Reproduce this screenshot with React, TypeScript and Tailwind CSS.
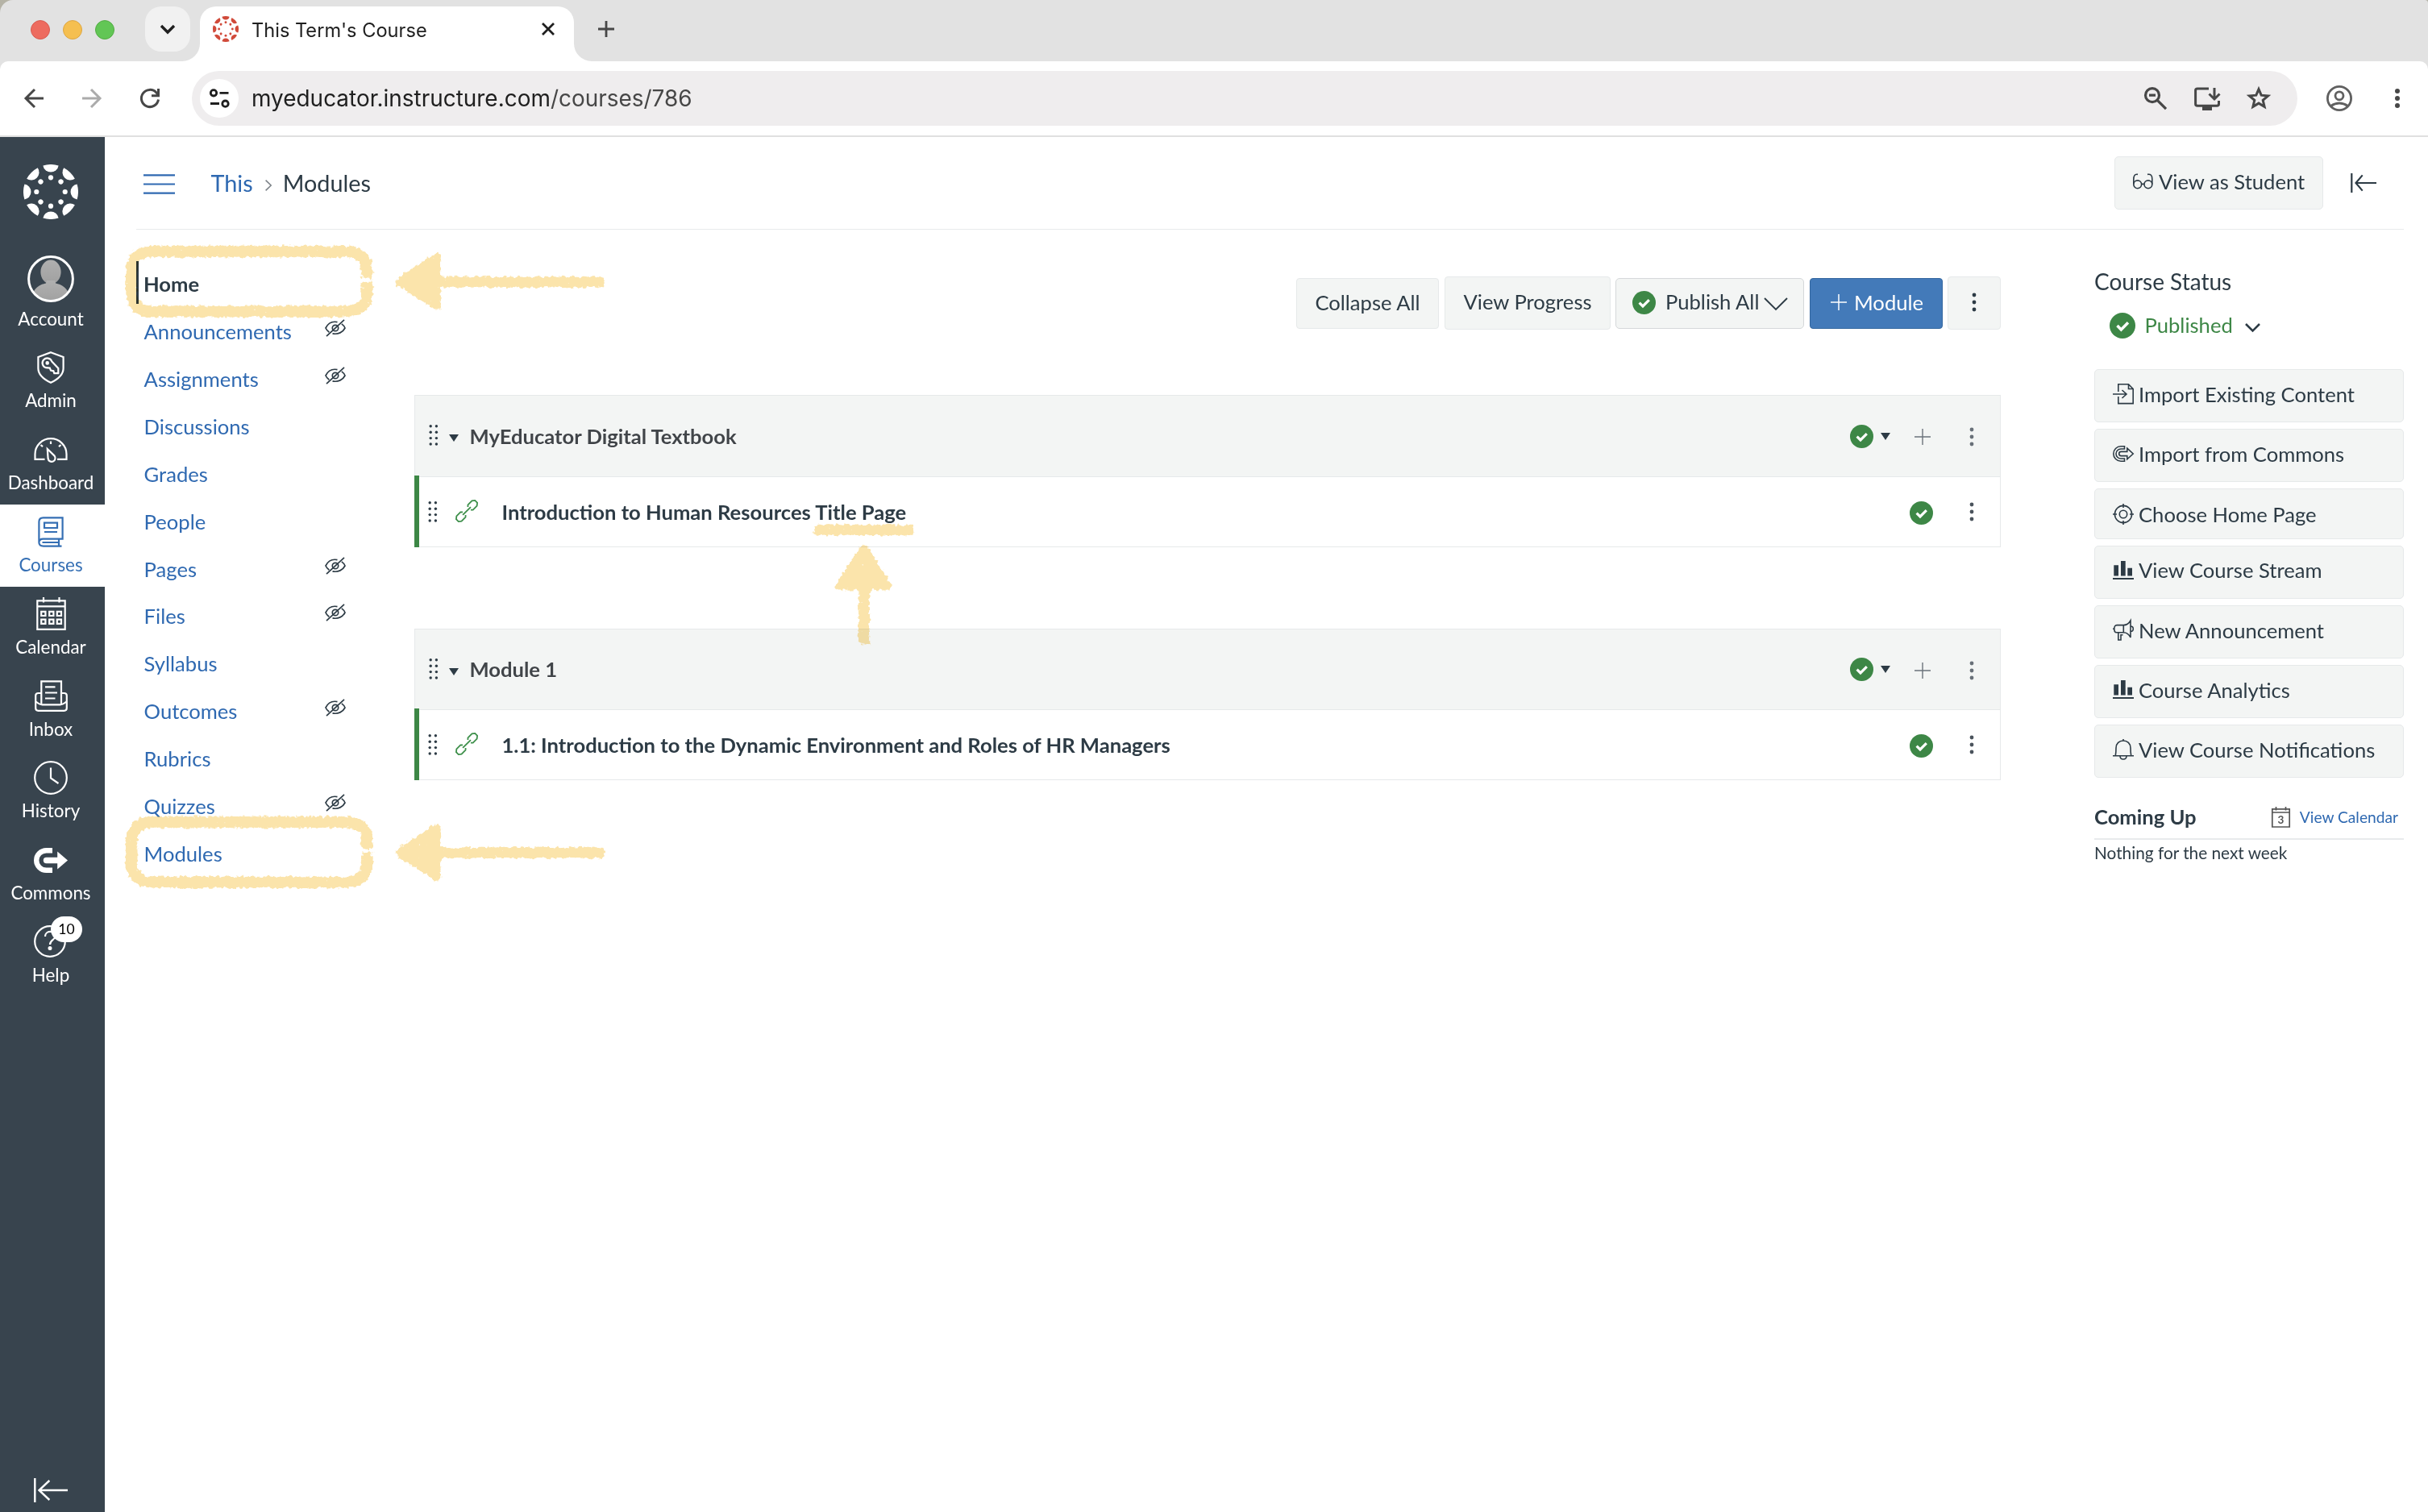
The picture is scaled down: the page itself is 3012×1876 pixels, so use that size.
import { type ReactNode } from "react";

interface IconProps {
  w: number;
  h: number;
  stroke?: number;
  className?: string;
  children: ReactNode;
}

function Icon({ w, h, stroke = 2, className = "", children }: IconProps) {
  return (
    <svg
      width={w}
      height={h}
      viewBox={`0 0 ${w} ${h}`}
      fill="none"
      stroke="currentColor"
      strokeWidth={stroke}
      className={`shrink-0 overflow-visible ${className}`}
    >
      {children}
    </svg>
  );
}

const ANGLES = [0, 45, 90, 135, 180, 225, 270, 315];

function CanvasLogo({ size, className = "" }: { size: number; className?: string }) {
  return (
    <svg width={size} height={size} viewBox="-34 -34 68 68" className={`shrink-0 ${className}`} fill="currentColor">
      {ANGLES.map((angle) => (
        <g key={angle} transform={`rotate(${angle})`}>
          <path d="M-9.6 -32.6A34 34 0 0 1 9.6 -32.6A9.7 9.4 0 0 1 -9.6 -32.6Z" />
          <circle cx="0" cy="-17.7" r="3.1" />
        </g>
      ))}
    </svg>
  );
}

function CheckCircle({ size = 29, className = "" }: { size?: number; className?: string }) {
  return (
    <svg width={size} height={size} viewBox="0 0 29 29" className={`shrink-0 ${className}`}>
      <circle cx="14.5" cy="14.5" r="14.5" fill="#3d8746" />
      <path d="M8.6 14.6L13 19L20.8 11.2" fill="none" stroke="#fff" strokeWidth="3.2" />
    </svg>
  );
}

function Kebab({ className = "" }: { className?: string }) {
  return (
    <svg width="20" height="24" viewBox="0 0 20 24" fill="currentColor" className={`shrink-0 ${className}`}>
      <circle cx="10" cy="3" r="2.4" />
      <circle cx="10" cy="12" r="2.4" />
      <circle cx="10" cy="21" r="2.4" />
    </svg>
  );
}

function Grip({ className = "" }: { className?: string }) {
  return (
    <svg width="12" height="26" viewBox="0 0 12 26" fill="currentColor" className={`shrink-0 ${className}`}>
      {[1.8, 9.2, 16.6, 24].map((y) => (
        <g key={y}>
          <circle cx="2.2" cy={y} r="1.7" />
          <circle cx="9.4" cy={y} r="1.7" />
        </g>
      ))}
    </svg>
  );
}

function Caret({ className = "" }: { className?: string }) {
  return (
    <svg width="12" height="9" viewBox="0 0 12 9" fill="currentColor" className={`shrink-0 ${className}`}>
      <path d="M0 0H12L6 9Z" />
    </svg>
  );
}

function EyeOff() {
  return (
    <Icon w={26} h={22} stroke={1.7} className="text-[#2d3b45]">
      <path d="M15.5 3.6C8.5 2.2 3.5 6 1 11C2 13.2 3.6 15 5.4 16.2M9.5 17.9C16.5 19.4 22.5 16 25 11C24 8.8 22.6 7.1 20.8 5.9" />
      <circle cx="13" cy="11" r="3.7" />
      <path d="M2 21.2L24 0.8" />
    </Icon>
  );
}

function CollapseIcon({ w, h, stroke }: { w: number; h: number; stroke: number }) {
  return (
    <Icon w={w} h={h} stroke={stroke}>
      <path d={`M1.3 0V${h}M6.5 ${h / 2}H${w}M${w * 0.46} ${h * 0.1}L6.5 ${h / 2}L${w * 0.46} ${h * 0.9}`} />
    </Icon>
  );
}

function TabStrip() {
  return (
    <div className="flex h-[76px] items-start rounded-tl-[16px] rounded-tr-[4px] bg-[#e2e2e2] pl-[38px]">
      <div className="mt-[25px] flex gap-4">
        <span className="size-6 rounded-full border border-[#d85a50] bg-[#ed6b5f]" />
        <span className="size-6 rounded-full border border-[#dda642] bg-[#f5bf50]" />
        <span className="size-6 rounded-full border border-[#52ac43] bg-[#62c655]" />
      </div>
      <button type="button" className="mt-2 ml-[38px] flex size-14 items-center justify-center rounded-[20px] bg-[#f1f1f1] text-[#1f1f1f]" aria-label="Search tabs">
        <Icon w={18} h={11} stroke={3.4}>
          <path d="M1 1L9 9L17 1" />
        </Icon>
      </button>
      <div className="relative mt-2 ml-3 flex h-[68px] w-[464px] items-center rounded-t-[20px] bg-white pb-3 pl-4">
        <svg width="22" height="22" className="absolute bottom-0 -left-[22px]" fill="#fff">
          <path d="M22 0V22H0A22 22 0 0 0 22 0Z" />
        </svg>
        <svg width="22" height="22" className="absolute -right-[22px] bottom-0" fill="#fff">
          <path d="M0 0V22H22A22 22 0 0 1 0 0Z" />
        </svg>
        <CanvasLogo size={32} className="text-[#d14a3a]" />
        <span className="mt-[4px] ml-4 flex-1 font-['Inter',sans-serif] text-[23.6px] leading-8 text-[#1f1f1f]">This Term's Course</span>
        <Icon w={16} h={16} stroke={2.8} className="mr-6 text-[#1f1f1f]">
          <path d="M1 1L15 15M15 1L1 15" />
        </Icon>
      </div>
      <Icon w={20} h={20} stroke={2.8} className="mt-[26px] ml-[30px] text-[#474747]">
        <path d="M10 0V20M0 10H20" />
      </Icon>
    </div>
  );
}

function AddressBar() {
  return (
    <div className="bg-[#e2e2e2]">
      <div className="flex h-[94px] items-center rounded-t-[10px] border-b-2 border-[#e0e0e0] bg-white text-[#474747]">
        <Icon w={24} h={24} stroke={3} className="ml-[30px]">
          <path d="M24 12H2.5M13 1L2 12L13 23" />
        </Icon>
        <Icon w={24} h={24} stroke={3} className="ml-12 text-[#ababab]">
          <path d="M0 12H21.5M11 1L22 12L11 23" />
        </Icon>
        <Icon w={24} h={24} stroke={3} className="ml-12">
          <path d="M22.5 13.5A10.6 10.6 0 1 1 20 5L23 8.5M22.5 0V8.8H14" />
        </Icon>
        <div className="ml-10 flex h-[68px] w-[2612px] items-center rounded-full bg-[#efedee] pl-[10px]">
          <span className="flex size-12 items-center justify-center rounded-full bg-white text-[#1f1f1f]">
            <Icon w={24} h={24} stroke={2.8}>
              <circle cx="5" cy="5.3" r="3.7" />
              <path d="M12.5 5.3H23.5M1 18.5H12" />
              <circle cx="19.5" cy="18.7" r="3.7" />
            </Icon>
          </span>
          <span className="ml-4 flex-1 font-['Inter',sans-serif] text-[27.95px] leading-10 text-[#1f1f1f]">
            myeducator.instructure.com<span className="text-[#474747]">/courses/786</span>
          </span>
          <Icon w={28} h={28} stroke={3.2}>
            <circle cx="10" cy="10.2" r="8.5" />
            <path d="M16.2 16.4L27 27.2M6 10.2H14" />
          </Icon>
          <Icon w={32} h={29} stroke={3} className="ml-[34px]">
            <path d="M18 2H4Q1.6 2 1.6 4V21Q1.6 23.3 4 23.3H28Q30.5 23.3 30.5 21V17" />
            <path d="M25 1V14.5M18.5 8.5L25 15L31.5 8.5" />
            <path d="M10 26.5H22" strokeWidth="5" />
          </Icon>
          <Icon w={32} h={32} stroke={3} className="mr-8 ml-8">
            <path d="M16 4.6L19.2 12.2L27.6 12.9L21.2 18.4L23.1 26.4L16 22.1L8.9 26.4L10.8 18.4L4.4 12.9L12.8 12.2Z" />
          </Icon>
        </div>
        <Icon w={32} h={32} stroke={2.8} className="ml-9 text-[#606060]">
          <circle cx="16" cy="16" r="14.6" />
          <circle cx="16" cy="12.8" r="5" />
          <path d="M5.5 25.5Q16 18.5 26.5 25.5" />
        </Icon>
        <svg width="8" height="24" viewBox="0 0 8 24" fill="currentColor" className="ml-[52px]">
          <circle cx="4" cy="3" r="3" />
          <circle cx="4" cy="12" r="3" />
          <circle cx="4" cy="21" r="3" />
        </svg>
      </div>
    </div>
  );
}

const globalNav: { label: string; active?: boolean; badge?: string; icon: ReactNode }[] = [
  {
    label: "Admin",
    icon: (
      <Icon w={34} h={40} stroke={2.2}>
        <path d="M17 1.2L32.6 7V21C32.6 30 25 35 17 38.8C9 35 1.4 30 1.4 21V7Z" />
        <path d="M18.3 12.5L26.3 21V27.2H21.3L20.3 24.3L17 23.6L15.8 20.6L11 20.2A6 6 0 1 1 18.3 12.5Z" />
        <circle cx="12.7" cy="14.4" r="1.2" />
      </Icon>
    ),
  },
  {
    label: "Dashboard",
    icon: (
      <Icon w={42} h={30} stroke={2.2}>
        <path d="M13.5 26.8H1.5V20.5A19.5 19.3 0 0 1 40.5 20.5V26.8H29" />
        <path d="M21 4.5V8M8.5 9L11 11.2M33.5 9L31 11.2" />
        <path d="M16.8 14L25.6 22.6A4.5 4.5 0 1 1 17.6 26Z" />
      </Icon>
    ),
  },
  {
    label: "Courses",
    active: true,
    icon: (
      <Icon w={32} h={38} stroke={2.2}>
        <path d="M29.5 36.6H7C3.6 36.6 1.4 34.8 1.4 32V6.5C1.4 3.3 3.4 1.3 6.6 1.3H30.6V27.6H6.5C3.4 27.6 1.4 29.4 1.4 32M26 28V36" />
        <path d="M5.5 32H25.5M8 19H24" />
        <path d="M8 7.6H24V14H8Z" />
      </Icon>
    ),
  },
  {
    label: "Calendar",
    icon: (
      <Icon w={37} h={41} stroke={2.2}>
        <path d="M1.3 4.3H35.7V39.8H1.3ZM1.3 11.3H35.7M9 0V6.5M28.5 0V6.5" />
        <path d="M6.2 17.8H11.4V23H6.2ZM16.2 17.8H21.4V23H16.2ZM25.8 17.8H31V23H25.8ZM6.2 27.6H11.4V32.8H6.2ZM16.2 27.6H21.4V32.8H16.2ZM25.8 27.6H31V32.8H25.8Z" />
      </Icon>
    ),
  },
  {
    label: "Inbox",
    icon: (
      <Icon w={41} h={39} stroke={2.2}>
        <path d="M8.3 29.5V1.3H33V29.5M13 8.3H25.5M13 15.5H28M13 22.5H25.5" />
        <path d="M8 16H4.5Q1.2 16 1.2 19V34.5Q1.2 37.8 4.5 37.8H36.5Q39.8 37.8 39.8 34.5V19Q39.8 16 36.5 16H33" />
        <path d="M1.5 26.5C4.5 29 6.5 30.3 9.5 30.3H31.5C34.5 30.3 36.5 29 39.5 26.5" />
      </Icon>
    ),
  },
  {
    label: "History",
    icon: (
      <Icon w={42} h={42} stroke={2.2}>
        <circle cx="21" cy="21" r="19.8" />
        <path d="M21 8.5V21.5L30.5 28" />
      </Icon>
    ),
  },
  {
    label: "Commons",
    icon: (
      <Icon w={42} h={31}>
        <path d="M23 3.2H15.5A12.3 12.3 0 0 0 15.5 27.8H23" strokeWidth="6.4" />
        <path d="M15.5 15.5H31" strokeWidth="7.4" strokeLinecap="round" />
        <path d="M29.2 4.5L42 15.5L29.2 26.5Z" fill="currentColor" stroke="none" />
      </Icon>
    ),
  },
  {
    label: "Help",
    badge: "10",
    icon: (
      <Icon w={42} h={40} stroke={2.2} className="mt-[-2px]">
        <circle cx="20" cy="20" r="18.8" />
        <path d="M14 14C14 6 26.5 6 26.5 13.5C26.5 18.5 20 18 20 24" />
        <circle cx="20" cy="28.5" r="1.4" fill="currentColor" />
      </Icon>
    ),
  },
];

function GlobalNav() {
  return (
    <aside className="flex w-[130px] shrink-0 flex-col bg-[#38444e] text-[22.4px] leading-7 text-white">
      <div className="flex h-[139px] items-center justify-center pr-1 pb-[3px]">
        <CanvasLogo size={68} />
      </div>
      <div className="flex h-[113.5px] flex-col items-center gap-[7px] pt-2 pr-1">
        <svg width="58" height="58" viewBox="0 0 58 58">
          <defs>
            <clipPath id="avatar">
              <circle cx="29" cy="29" r="26" />
            </clipPath>
            <linearGradient id="avatarFill" x1="0" y1="0" x2="0" y2="1">
              <stop offset="0" stopColor="#b0b0b0" />
              <stop offset="1" stopColor="#a0a0a0" />
            </linearGradient>
          </defs>
          <g clipPath="url(#avatar)" fill="url(#avatarFill)">
            <ellipse cx="29" cy="20.5" rx="12.6" ry="15" />
            <path d="M5 58C5 40 16 36 23 34.5L24 31H34L35 34.5C42 36 53 40 53 58Z" />
          </g>
          <circle cx="29" cy="29" r="27.4" fill="none" stroke="#fff" strokeWidth="3" />
        </svg>
        Account
      </div>
      {globalNav.map((item) => (
        <div
          key={item.label}
          className={`relative flex h-[101.8px] shrink-0 flex-col items-center gap-[1.2px] pt-[7.75px] pr-1 ${item.active ? "bg-white text-[#356fb4]" : ""}`}
        >
          <div className="flex h-[52px] items-center">{item.icon}</div>
          {item.label}
          {item.badge && (
            <span className="absolute top-[2px] left-[63px] flex h-8 w-[39px] items-center justify-center rounded-full bg-white text-[17.5px] text-black">
              {item.badge}
            </span>
          )}
        </div>
      ))}
      <div className="mt-auto mb-3 flex justify-center pr-1">
        <CollapseIcon w={42} h={30} stroke={2.4} />
      </div>
    </aside>
  );
}

const courseNav = [
  { label: "Home", current: true },
  { label: "Announcements", hidden: true },
  { label: "Assignments", hidden: true },
  { label: "Discussions" },
  { label: "Grades" },
  { label: "People" },
  { label: "Pages", hidden: true },
  { label: "Files", hidden: true },
  { label: "Syllabus" },
  { label: "Outcomes", hidden: true },
  { label: "Rubrics" },
  { label: "Quizzes", hidden: true },
  { label: "Modules" },
];

function CourseNav() {
  return (
    <nav className="w-[345px] shrink-0 pt-[37.8px] text-[25.6px] leading-8 text-[#2f69b1]">
      {courseNav.map((item) => (
        <div key={item.label} className="flex h-[58.9px] w-[260px] items-center justify-between">
          {item.current ? (
            <span className="mb-[3px] flex h-[53px] items-center border-l-[3px] border-[#2d3b45] pt-[3px] pl-[6px] font-bold text-[#2d3b45]">
              {item.label}
            </span>
          ) : (
            <span className="pl-[9.6px]">{item.label}</span>
          )}
          {item.hidden && (
            <span className="pb-[8px]">
              <EyeOff />
            </span>
          )}
        </div>
      ))}
    </nav>
  );
}

function Toolbar() {
  return (
    <div className="flex h-[66px] items-center justify-end text-[25.6px] leading-8">
      <button type="button" className="h-[63px] w-[177px] rounded-[4px] border border-[#e6e9ea] bg-[#f3f5f4] pb-[2px]">Collapse All</button>
      <button type="button" className="ml-[7px] h-[66px] w-[206px] rounded-[4px] border border-[#e6e9ea] bg-[#f3f5f4] pb-[4px]">View Progress</button>
      <button type="button" className="ml-[6px] flex h-[63px] w-[234px] items-center rounded-[5px] border border-[#d5d8da] bg-[#f3f5f4] pl-[20px]">
        <CheckCircle className="mb-px" />
        <span className="mb-[4px] ml-[12px]">Publish All</span>
        <Icon w={30} h={16} stroke={1.9} className="mt-[2px] ml-[6px]">
          <path d="M1 1L15 15L29 1" />
        </Icon>
      </button>
      <button type="button" className="ml-[7px] flex h-[63px] w-[165px] items-center rounded-[4px] border border-[#33679f] bg-[#437ab9] pb-[2px] pl-[25px] text-white">
        <Icon w={20} h={20} stroke={1.5}>
          <path d="M10 0V20M0 10H20" />
        </Icon>
        <span className="ml-[9px]">Module</span>
      </button>
      <button type="button" className="ml-[6px] flex h-[66px] w-[66px] items-center justify-center rounded-[4px] border border-[#e6e9ea] bg-[#f3f5f4] pb-[3px]" aria-label="More">
        <Kebab />
      </button>
    </div>
  );
}

interface ModuleProps {
  title: string;
  item: string;
  headerClass: string;
}

function ModuleCard({ title, item, headerClass }: ModuleProps) {
  return (
    <section className="border border-[#e6e9ea] text-[25.6px] leading-8 font-bold">
      <header className={`flex items-center bg-[#f3f5f4] pr-[25px] pl-[17px] ${headerClass}`}>
        <Grip className="mb-[2px]" />
        <Caret className="mt-[5px] ml-[13px]" />
        <h2 className="mb-px ml-[13.5px] flex-1 text-[#414549] [text-shadow:0_1px_1px_#fff]">{title}</h2>
        <CheckCircle />
        <Caret className="ml-[9px]" />
        <Icon w={20} h={20} stroke={1.4} className="mt-[2px] ml-[30px] text-[#6b737b]">
          <path d="M10 0V20M0 10H20" />
        </Icon>
        <Kebab className="mt-[2px] ml-[41px] text-[#687078]" />
      </header>
      <div className="relative flex h-[87px] items-center border-t border-[#e6e9ea] pr-[25px] pl-[16px]">
        <span className="absolute -top-[2px] -bottom-px -left-px w-[6px] bg-[#3d8746]" />
        <Grip />
        <Icon w={26} h={26} stroke={1.8} className="mb-[3px] ml-[23px] text-[#3d8f4a]">
          <g transform="rotate(-45 13 13)">
            <path d="M8.5 10.5L6.5 8.6H-0.5L-3.5 11V15L-0.5 17.4H6.5L8.5 15.5M17.5 15.5L19.5 17.4H26.5L29.5 15V11L26.5 8.6H19.5L17.5 10.5M6 13H20" />
          </g>
        </Icon>
        <a className="ml-[30.5px] flex-1">{item}</a>
        <CheckCircle className="mt-[3px]" />
        <Kebab className="ml-[38px] text-[#4a535c]" />
      </div>
    </section>
  );
}

const sideActions: { label: string; boxClass: string; icon: ReactNode }[] = [
  {
    label: "Import Existing Content",
    boxClass: "h-[66px] pb-[4px]",
    icon: (
      <Icon w={26} h={26} stroke={1.6}>
        <path d="M6.8 10V0.8H19.5L25.2 6.5V24.6H6.8V16M19.5 0.8V6.5H25.2M0 13H17M11.5 8L17 13L11.5 18" />
      </Icon>
    ),
  },
  {
    label: "Import from Commons",
    boxClass: "h-[66px] pb-[4px]",
    icon: (
      <Icon w={26} h={20} stroke={1.6}>
        <path d="M14.5 0.8H10A9.2 9.2 0 0 0 10 19.2H14.5V16H10A6 6 0 0 1 10 4H14.5ZM17.8 3.2L25.2 10L17.8 16.8V12.6H10.3A2.6 2.6 0 0 1 10.3 7.4H17.8Z" />
      </Icon>
    ),
  },
  {
    label: "Choose Home Page",
    boxClass: "h-[63px]",
    icon: (
      <Icon w={26} h={26} stroke={1.6}>
        <circle cx="13" cy="13" r="10.6" />
        <circle cx="13" cy="13" r="4.7" />
        <path d="M13 0V5M13 21V26M0 13H5M21 13H26" />
      </Icon>
    ),
  },
  {
    label: "View Course Stream",
    boxClass: "h-[66px] pb-[6px]",
    icon: (
      <Icon w={26} h={23}>
        <path d="M1.3 5.3H7V18.4H1.3ZM10 0H15.7V18.4H10ZM18.3 8.7H24V18.4H18.3Z" fill="currentColor" stroke="none" />
        <path d="M0 22H26" />
      </Icon>
    ),
  },
  {
    label: "New Announcement",
    boxClass: "h-[66px] pb-[5px]",
    icon: (
      <Icon w={26} h={26} stroke={1.6}>
        <path d="M22 1V22C20 18 17 15.8 13.3 15.8H4.5C2.5 15.8 1.8 14 1.8 11.3S2.8 6.6 5 6.6H13.3C17 6.6 20 4.5 22 1ZM13.3 6.6V15.8M6.8 15.8V25H10V18.8H12.5M22 8C26.4 8 26.4 14.6 22 14.6M0 11.2H1.8" />
      </Icon>
    ),
  },
  {
    label: "Course Analytics",
    boxClass: "h-[66px] pb-[5px]",
    icon: (
      <Icon w={26} h={23}>
        <path d="M1.3 5.3H7V18.4H1.3ZM10 0H15.7V18.4H10ZM18.3 8.7H24V18.4H18.3Z" fill="currentColor" stroke="none" />
        <path d="M0 22H26" />
      </Icon>
    ),
  },
  {
    label: "View Course Notifications",
    boxClass: "h-[66px] pb-[5px]",
    icon: (
      <Icon w={26} h={26} stroke={1.6}>
        <path d="M13 0V2M0 20.8H26M3.3 20.5C4 17 4 15 4 11C4 5.5 8 2 13 2S22 5.5 22 11C22 15 22 17 22.7 20.5M9 21C9 26.3 17 26.3 17 21" />
      </Icon>
    ),
  },
];

function RightSidebar() {
  return (
    <aside className="ml-[116px] w-[384px] shrink-0 pt-[46px]">
      <h2 className="text-[28px] leading-9">Course Status</h2>
      <div className="mt-[20px] flex h-[34px] items-center pl-[19px] text-[25.6px] leading-8 text-[#3d8746]">
        <CheckCircle size={32} />
        <span className="mb-[2px] ml-[11.5px]">Published</span>
        <Icon w={19} h={11} stroke={2.6} className="mt-1 ml-[15px] text-[#2d3b45]">
          <path d="M1 1L9.5 9.5L18 1" />
        </Icon>
      </div>
      <div className="mt-[37px] flex flex-col gap-2">
        {sideActions.map((action) => (
          <button
            type="button"
            key={action.label}
            className={`flex items-center gap-[6px] rounded-[5px] border border-[#e6e9ea] bg-[#f3f5f4] pl-[22px] text-[25.6px] leading-8 ${action.boxClass}`}
          >
            {action.icon}
            {action.label}
          </button>
        ))}
      </div>
      <div className="mt-[26px] flex h-[51px] items-center border-b-2 border-[#e8eaec] pr-[7px] pb-[4px]">
        <h2 className="flex-1 pb-[2px] text-[25.6px] leading-8 font-bold">Coming Up</h2>
        <Icon w={23} h={26} stroke={1.7} className="text-[#555]">
          <path d="M0.8 2.8H22.2V25H0.8ZM0.8 7H22.2M5.5 0V4.5M17.5 0V4.5" />
          <text x="11.5" y="20.5" textAnchor="middle" fill="currentColor" stroke="none" fontSize="13.5" fontWeight="700">3</text>
        </Icon>
        <a className="mt-px ml-[12px] text-[19.2px] leading-6 text-[#2f69b1]">View Calendar</a>
      </div>
      <p className="mt-[2px] text-[20.8px] leading-7">Nothing for the next week</p>
    </aside>
  );
}

function PageHeader() {
  return (
    <div className="flex h-[115px] items-center border-b border-[#e8eaec] pl-[9px] text-[28.8px] leading-9">
      <Icon w={39} h={25} stroke={2.2} className="mt-[2px] text-[#2f69b1]">
        <path d="M0 1.3H39M0 12.5H39M0 23.7H39" />
      </Icon>
      <a className="ml-[44.5px] text-[#2f69b1]">This</a>
      <Icon w={8} h={14} stroke={1.5} className="mt-[6px] ml-[15px] text-[#7a8086]">
        <path d="M0.6 0.6L7.2 7L0.6 13.4" />
      </Icon>
      <span className="ml-[14px] flex-1">Modules</span>
      <button type="button" className="flex h-[66px] w-[259px] items-center rounded-[5px] border border-[#e6e9ea] bg-[#f3f5f4] pb-[4px] pl-[22px] text-[25.6px] leading-8">
        <Icon w={25} h={20} stroke={1.6}>
          <circle cx="5.7" cy="13.8" r="4.9" />
          <circle cx="18.9" cy="13.8" r="4.9" />
          <path d="M10.5 13.4H14M0.8 13.5V8C0.8 3 2 0.8 6 1.4M23.8 13.5V7C23.8 2.5 22 0.8 18 1.4" />
        </Icon>
        <span className="ml-[7px]">View as Student</span>
      </button>
      <span className="mr-[34px] ml-[34px]">
        <CollapseIcon w={32} h={24} stroke={2.2} />
      </span>
    </div>
  );
}

// Hand-drawn chalk markers laid over the page
function ChalkMarks() {
  return (
    <svg width="3012" height="1876" viewBox="0 0 3012 1876" className="pointer-events-none absolute inset-0 mix-blend-multiply">
      <defs>
        <filter id="chalk" filterUnits="userSpaceOnUse" x="140" y="290" width="1020" height="830" colorInterpolationFilters="sRGB">
          <feGaussianBlur in="SourceAlpha" stdDeviation="1.8" result="soft" />
          <feTurbulence type="fractalNoise" baseFrequency="0.22" numOctaves="2" seed="7" result="noise" />
          <feComposite in="soft" in2="noise" operator="arithmetic" k1="0" k2="1" k3="1.5" k4="-0.7" result="mix" />
          <feComponentTransfer in="mix" result="edge">
            <feFuncA type="linear" slope="4" intercept="-1.4" />
          </feComponentTransfer>
          <feMorphology in="SourceAlpha" operator="dilate" radius="2" result="bounds" />
          <feComposite in="edge" in2="bounds" operator="in" result="grain" />
          <feFlood floodColor="#fbe4ab" />
          <feComposite in2="grain" operator="in" />
        </filter>
      </defs>
      <g filter="url(#chalk)" stroke="#fbe4ab" fill="none" strokeWidth="13.5" strokeLinejoin="round">
        <path d="M455.5 350V360Q455.5 386.500 429 386.500H189Q163 386.500 163 360V338Q163 312 189 312H429Q455.500 312 455.500 338V345" />
        <path d="M455.5 1058V1068Q455.5 1094.500 429 1094.500H189Q163 1094.500 163 1068V1046Q163 1020 189 1020H429Q455.500 1020 455.500 1046V1053" />
        <path d="M540 350H749" strokeWidth="12.500" />
        <path d="M540 1058H749" strokeWidth="12.500" />
        <path d="M1010 657.500H1133" strokeWidth="12.500" />
        <path d="M1072 725V799" strokeWidth="13" />
        <g fill="#fbe4ab" strokeWidth="9">
          <path d="M495 350L542 319V380Z" />
          <path d="M495 1058L542 1027V1088Z" />
          <path d="M1072 681L1041 727H1101Z" />
        </g>
      </g>
    </svg>
  );
}

export default function App() {
  return (
    <div className="relative flex h-[1876px] w-[3012px] flex-col overflow-hidden bg-[#b5b3a6] font-['Lato',sans-serif] text-[#2d3b45]">
      <TabStrip />
      <AddressBar />
      <div className="flex min-h-0 flex-1 bg-white">
        <GlobalNav />
        <div className="flex-1 pr-[30px] pl-[39px]">
          <PageHeader />
          <div className="flex">
            <CourseNav />
            <main className="w-[1968px] shrink-0 pt-[58px]">
              <Toolbar />
              <div className="mt-[81px] flex flex-col gap-[101px]">
                <ModuleCard title="MyEducator Digital Textbook" item="Introduction to Human Resources Title Page" headerClass="h-[100px]" />
                <ModuleCard
                  title="Module 1"
                  item="1.1: Introduction to the Dynamic Environment and Roles of HR Managers"
                  headerClass="h-[99px]"
                />
              </div>
            </main>
            <RightSidebar />
          </div>
        </div>
      </div>
      <ChalkMarks />
    </div>
  );
}
